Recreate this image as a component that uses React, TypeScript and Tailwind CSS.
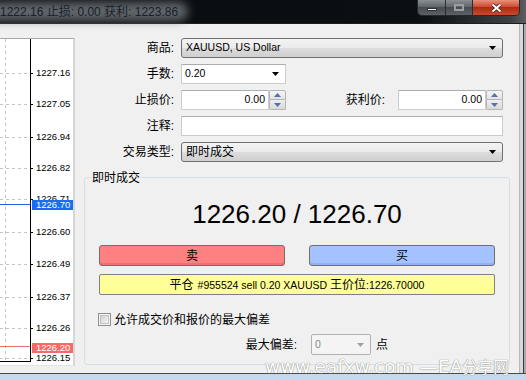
import type { ReactNode } from 'react'

const ui = "font-['Liberation_Sans','Noto_Sans_CJK_SC',sans-serif]"

// price scale of the tick chart (y is measured inside the chart panel)
const scale = [
  { y: 34, label: '1227.16' },
  { y: 65, label: '1227.05' },
  { y: 98, label: '1226.94' },
  { y: 129, label: '1226.82' },
  { y: 160, label: '1226.71' },
  { y: 193, label: '1226.60' },
  { y: 225, label: '1226.49' },
  { y: 258, label: '1226.37' },
  { y: 289, label: '1226.26' },
  { y: 319, label: '1226.15' },
]

function DownArrow({ color = '#000' }: { color?: string }) {
  return (
    <svg width="7" height="4" viewBox="0 0 7 4" aria-hidden>
      <path d="M0 0h7L3.5 4z" fill={color} />
    </svg>
  )
}

function Select({ text, latin }: { text: string; latin?: boolean }) {
  return (
    <div
      className={`flex h-[20px] flex-1 items-center justify-between rounded-[3px] border border-[#707070] bg-[linear-gradient(#f3f3f3_0%,#ebebeb_50%,#dddddd_50%,#cfcfcf_100%)] pl-[4px] pr-[6px] text-black ${
        latin ? 'text-[10.5px]' : 'text-[12px]'
      }`}
    >
      <span>{text}</span>
      <DownArrow />
    </div>
  )
}

function Spinner() {
  return (
    <div className="flex h-[20px] w-[17px] flex-col">
      <div className="flex h-[10px] items-center justify-center rounded-t-[2px] border border-[#b5b5b5] bg-[linear-gradient(#f6f6f6,#e3e3e3)]">
        <svg width="7" height="4" viewBox="0 0 7 4" aria-hidden>
          <path d="M3.5 0L7 4H0z" fill="#5670a8" />
        </svg>
      </div>
      <div className="flex h-[10px] items-center justify-center rounded-b-[2px] border border-t-0 border-[#b5b5b5] bg-[linear-gradient(#eeeeee,#dadada)]">
        <svg width="7" height="4" viewBox="0 0 7 4" aria-hidden>
          <path d="M0 0h7L3.5 4z" fill="#5670a8" />
        </svg>
      </div>
    </div>
  )
}

function SpinInput({ value }: { value: string }) {
  return (
    <div className="flex w-[105px] items-center">
      <div className="flex h-[20px] flex-1 items-center justify-end border border-[#c9ccd1] border-t-[#abadb3] bg-white pr-[3px] text-[10.5px] text-black">
        {value}
      </div>
      <Spinner />
    </div>
  )
}

function Row({ label, children }: { label: string; children: ReactNode }) {
  return (
    <div className="flex h-[20px] items-center gap-[7px]">
      <div className="w-[99px] text-right text-[12px] text-black">{label}</div>
      {children}
    </div>
  )
}

function ChartPanel() {
  return (
    <div className="relative h-[328px] w-[75px] shrink-0 border-t border-r-2 border-b border-[#a9a9a9] border-r-[#d6d6d6] border-b-[#e2e2e2] bg-white">
      <svg className="absolute left-0 top-0" width="73" height="326" aria-hidden>
        <line x1="5.5" y1="0" x2="5.5" y2="322" stroke="#c4c4c4" strokeDasharray="3 3" />
        {scale.map((s) => (
          <g key={s.label}>
            <line x1="0" y1={s.y + 0.5} x2="30" y2={s.y + 0.5} stroke="#c4c4c4" strokeDasharray="3 3" />
            <line x1="30" y1={s.y + 0.5} x2="33" y2={s.y + 0.5} stroke="#000" />
          </g>
        ))}
        <line x1="0" y1="165.5" x2="30" y2="165.5" stroke="#2360d8" />
        <line x1="0" y1="307.5" x2="30" y2="307.5" stroke="#f26b6b" />
        <line x1="30.5" y1="0" x2="30.5" y2="323" stroke="#000" />
        <line x1="0" y1="322.5" x2="31" y2="322.5" stroke="#000" />
      </svg>
      {scale.map((s) => (
        <div
          key={s.label}
          className="absolute left-[36px] text-[9.5px] leading-[10px] text-black"
          style={{ top: s.y - 5 }}
        >
          {s.label}
        </div>
      ))}
      <div className="absolute left-[32px] top-[161px] h-[10px] w-[41px] bg-[#1a6cf2] pl-[4px] text-[9.5px] leading-[10px] text-white">
        1226.70
      </div>
      <div className="absolute left-[32px] top-[304px] h-[10px] w-[41px] bg-[#f86a6a] pl-[4px] text-[9.5px] leading-[10px] text-white">
        1226.20
      </div>
    </div>
  )
}

function TitleBar() {
  return (
    <div className="relative h-[24px] border-b border-[#1c1d1f] bg-[linear-gradient(90deg,#0a0d12_0%,#0b0e13_80%,#3b4045_97%,#5a5f64_100%)]">
      <div className="absolute left-[-12px] top-[2px] h-[19px] w-[200px] rounded-[10px] bg-[#707579]/85 blur-[5px]" />
      <div className="relative flex h-[23px] items-center text-[12px] text-[#17202c]">
        1222.16 止损: 0.00 获利: 1223.86
      </div>
      <div className="absolute right-[6px] top-0 flex h-[16px] overflow-hidden rounded-b-[5px] border border-t-0 border-[#25282c]">
        <div className="flex w-[28px] items-center justify-center border-r border-[#2a2d31] bg-[linear-gradient(#8a8f95,#5c6168_50%,#474c53_50%,#5d6268)]">
          <div className="mt-[3px] h-[3px] w-[10px] border border-[#303338] bg-white" />
        </div>
        <div className="flex w-[27px] items-center justify-center border-r border-[#2a2d31] bg-[linear-gradient(#8a8f95,#5c6168_50%,#474c53_50%,#5d6268)]">
          <div className="h-[7px] w-[10px] border-2 border-[#9a9ea3]" />
        </div>
        <div className="flex w-[46px] items-center justify-center bg-[linear-gradient(#e8907a,#c8452c_50%,#b02a14_50%,#c84a2c)]">
          <svg width="11" height="10" viewBox="0 0 11 10" aria-hidden>
            <path d="M1.5 1.5l8 7M9.5 1.5l-8 7" stroke="#3a1a12" strokeWidth="3.4" />
            <path d="M1.5 1.5l8 7M9.5 1.5l-8 7" stroke="#fff" strokeWidth="2" />
          </svg>
        </div>
      </div>
    </div>
  )
}

export default function App() {
  return (
    <div className={`h-[380px] w-[526px] overflow-hidden bg-[#f0f0f0] ${ui}`}>
      <TitleBar />
      <div className="flex h-[349px]">
        <div className="relative flex w-[519px] pt-[14px]">
          <ChartPanel />

          <div className="flex flex-1 flex-col">
            <div className="flex flex-col gap-[6px] pr-[16px]">
              <Row label="商品:">
                <Select text="XAUUSD, US Dollar" latin />
              </Row>
              <Row label="手数:">
                <div className="flex h-[20px] w-[105px] items-center justify-between border border-[#c9ccd1] border-t-[#abadb3] bg-white pl-[3px] pr-[6px] text-[10.5px] text-black">
                  <span>0.20</span>
                  <DownArrow />
                </div>
              </Row>
              <Row label="止损价:">
                <SpinInput value="0.00" />
                <div className="flex-1 pr-[6px] text-right text-[12px] text-black">获利价:</div>
                <SpinInput value="0.00" />
              </Row>
              <Row label="注释:">
                <div className="h-[20px] flex-1 border border-[#c9ccd1] border-t-[#abadb3] bg-white" />
              </Row>
              <Row label="交易类型:">
                <Select text="即时成交" />
              </Row>
            </div>

            <div className="relative ml-[9px] mt-[15px] h-[188px] w-[426px] rounded-[3px] border border-[#d5dfe5] px-[14px] pt-[21px]">
              <div className="absolute left-[6px] top-[-9px] bg-[#f0f0f0] px-[1px] text-[12px] text-black">
                即时成交
              </div>
              <div className="text-center text-[26px] leading-[30px] text-black">1226.20 / 1226.70</div>
              <div className="mt-[16px] flex justify-between">
                <div className="flex h-[21px] w-[186px] items-center justify-center rounded-[3px] border border-[#707070] bg-[#ff8080] text-[12px] text-black shadow-[inset_0_-2px_0_#f07070]">
                  卖
                </div>
                <div className="flex h-[21px] w-[186px] items-center justify-center rounded-[3px] border border-[#707070] bg-[#a4c2ff] text-[12px] text-black shadow-[inset_0_-2px_0_#94b2f0]">
                  买
                </div>
              </div>
              <div className="mt-[8px] flex h-[21px] items-center justify-center gap-[4px] rounded-[2px] border border-[#808080] bg-[#ffff99] text-[10.5px] text-black">
                <span className="text-[12px]">平仓</span>
                <span>
                  #955524 sell 0.20 XAUUSD <span className="text-[12px]">王价位</span>:1226.70000
                </span>
              </div>
              <div className="ml-[-1px] mt-[18px] flex h-[13px] items-center gap-[3px]">
                <div className="flex h-[13px] w-[13px] items-center justify-center border border-[#8f8f8f] bg-[#f4f4f4]">
                  <div className="h-[9px] w-[9px] border border-[#c2c2c2] bg-[linear-gradient(135deg,#cfcfcf,#f6f6f6)]" />
                </div>
                <span className="text-[12px] text-black">允许成交价和报价的最大偏差</span>
              </div>
              <div className="mt-[8px] flex h-[21px] items-center">
                <div className="w-[198px] text-right text-[12px] text-black">最大偏差:</div>
                <div className="ml-[14px] flex h-[21px] w-[60px] items-center justify-between rounded-[2px] border border-[#adb2b5] bg-[#f4f4f4] pl-[3px] pr-[6px] text-[10.5px] text-[#8a8a8a]">
                  <span>0</span>
                  <DownArrow color="#a0a0a0" />
                </div>
                <span className="ml-[5px] text-[12px] text-black">点</span>
              </div>
            </div>
          </div>

          <div className="absolute left-[265px] top-[333px] whitespace-nowrap font-['DejaVu_Sans','Noto_Sans_CJK_SC',sans-serif] text-[18.5px] leading-[20px] text-white [text-shadow:0_0_1px_#8a8a8a,0_0_1px_#8a8a8a]">
            www.eafxw.com —EA<span className="text-[15.5px]">分享网</span>
          </div>
        </div>
        <div className="w-[7px] bg-[linear-gradient(90deg,#b9b9b9_0px,#b9b9b9_1px,#d8d8d8_1px,#d8d8d8_4px,#3c3c3c_4px,#3c3c3c_5px,#a7abb0_5px)]" />
      </div>
      <div className="h-[7px] border-t border-[#4a4a4a] bg-[#c2d9f0]" />
    </div>
  )
}
